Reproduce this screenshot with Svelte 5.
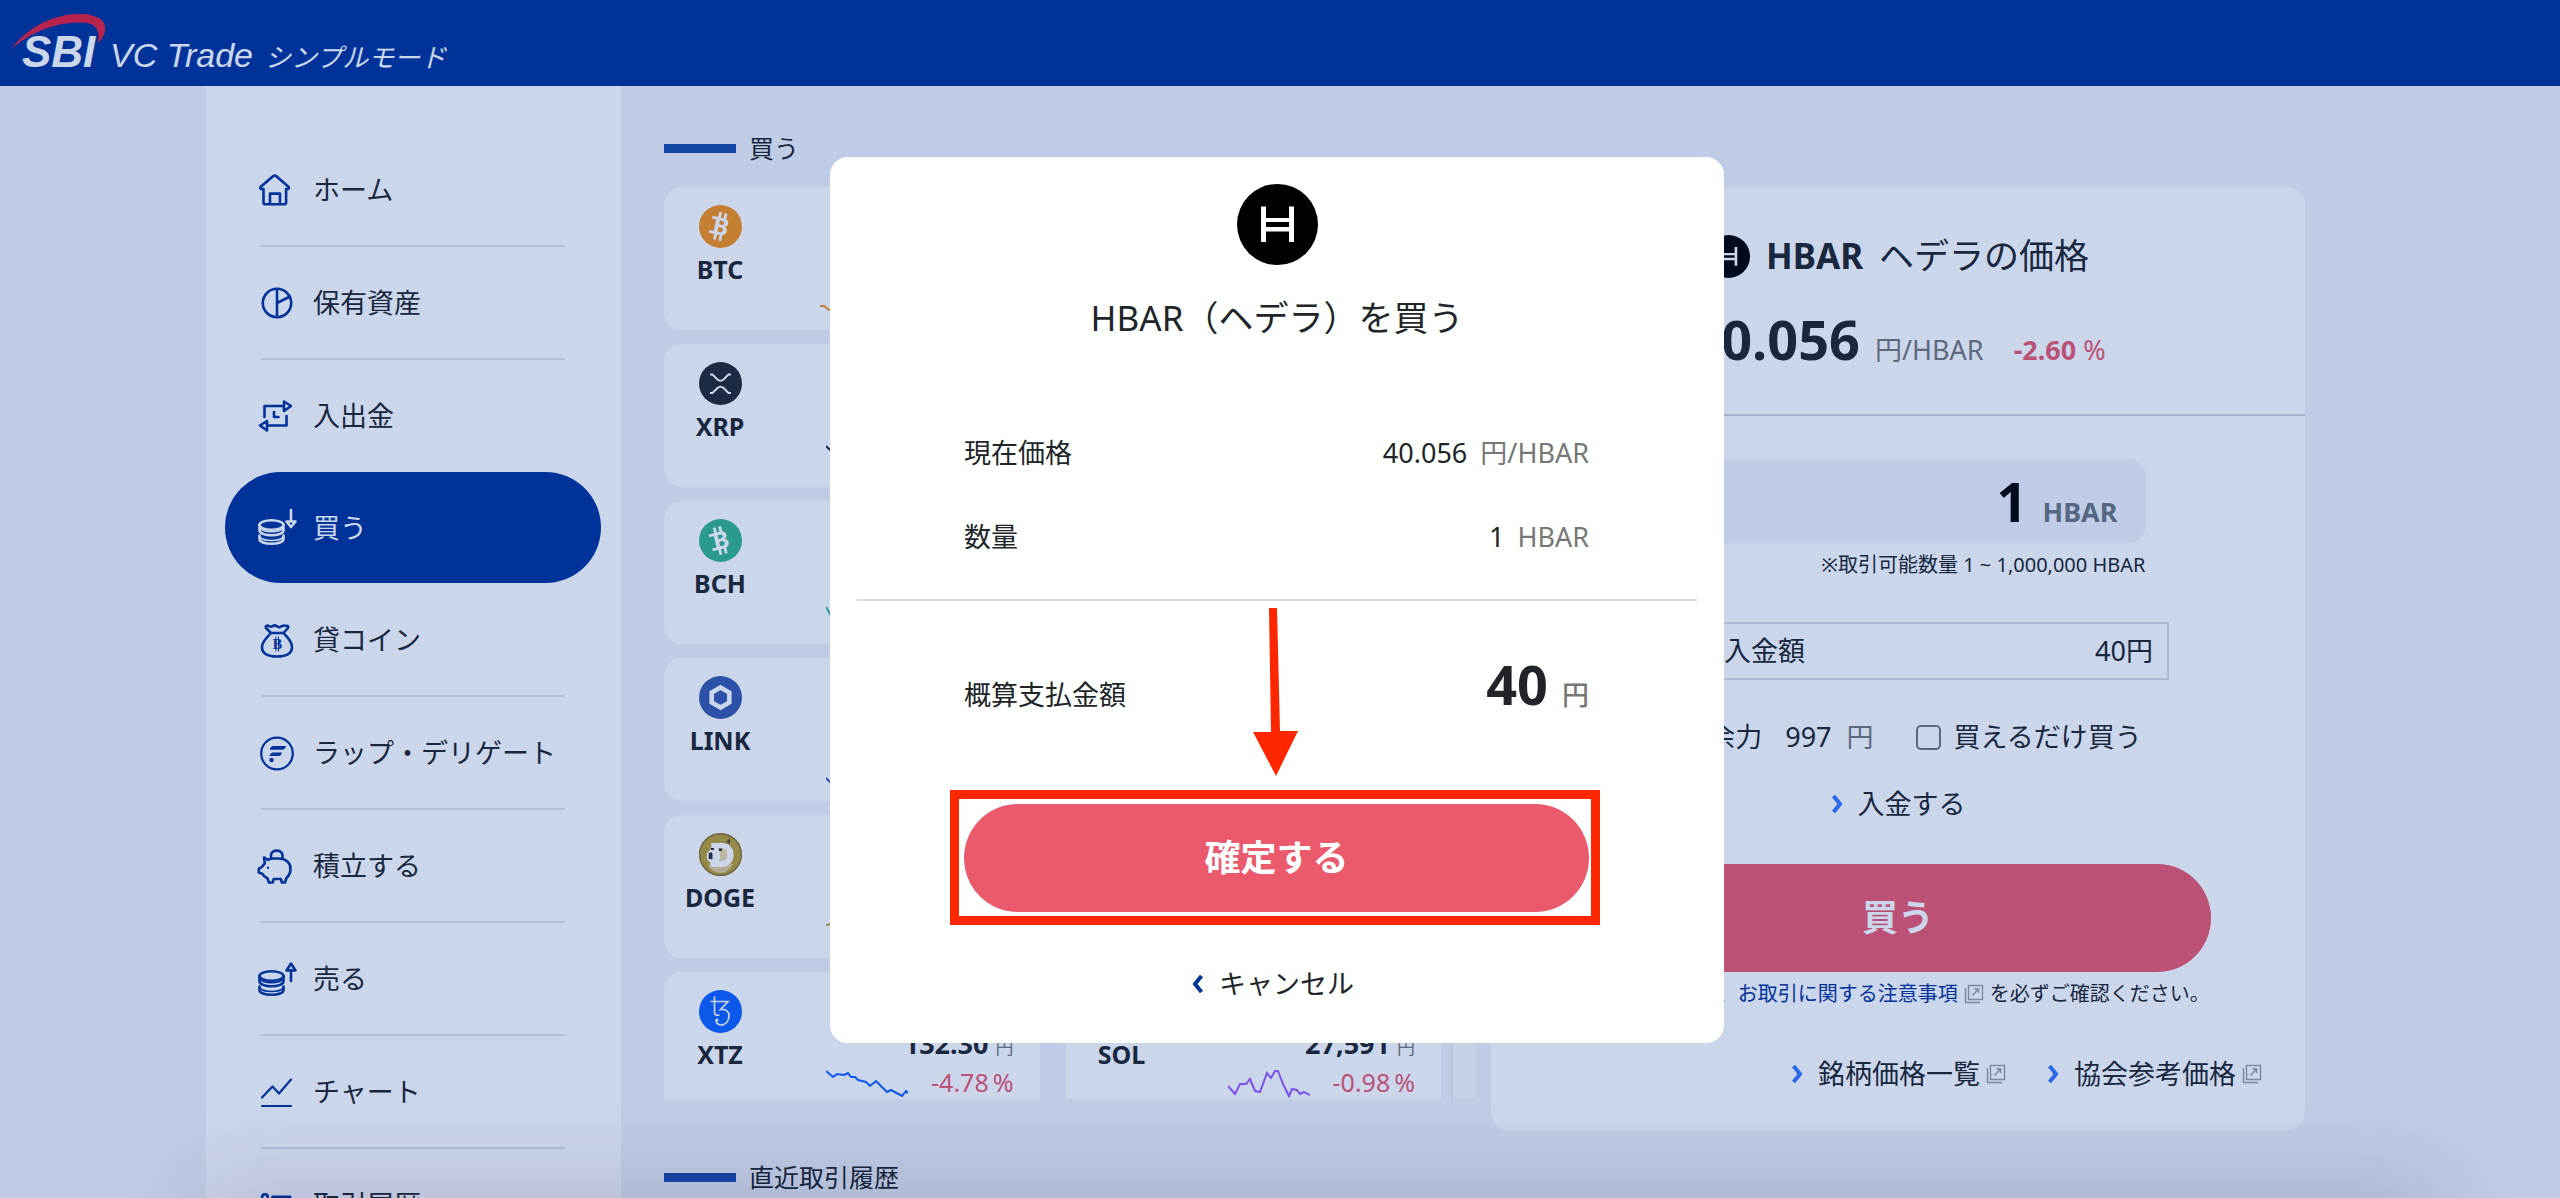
<script>
  const navItems = [
    { icon: "home", label: "ホーム" },
    { icon: "assets", label: "保有資産" },
    { icon: "transfer", label: "入出金", plain: true },
    { icon: "buy", label: "買う", active: true },
    { icon: "lend", label: "貸コイン" },
    { icon: "wrap", label: "ラップ・デリゲート" },
    { icon: "save", label: "積立する" },
    { icon: "sell", label: "売る" },
    { icon: "chart", label: "チャート" },
    { icon: "history", label: "取引履歴" },
  ];

  const coins = [
    { code: "BTC", name: "ビットコイン", price: "15,234,000", change: "+0.42", color: "#f7931a", line: "0,22 4,22 9,26 15,24 24,18 33,21 42,14 55,10 66,12 82,5" },
    { code: "ETH", name: "イーサリアム", price: "392,450", change: "-1.12", color: "#627eea", line: "0,8 12,12 24,6 36,15 48,18 60,14 72,22 82,24" },
    { code: "XRP", name: "エックスアールピー", price: "342.51", change: "-2.05", color: "#23292f", line: "0,5 5,10 12,8 22,15 33,12 45,20 58,18 70,25 82,24" },
    { code: "LTC", name: "ライトコイン", price: "13,480", change: "-1.87", color: "#345d9d", line: "0,6 12,10 24,8 36,16 48,13 60,20 72,22 82,21" },
    { code: "BCH", name: "BitcoinCash", price: "61,230", change: "-3.31", color: "#34b48a", line: "0,9 5,18 12,12 22,16 33,14 45,21 58,19 70,25 82,22" },
    { code: "DOT", name: "ポルカドット", price: "812.40", change: "-2.94", color: "#e6007a", line: "0,8 12,11 24,9 36,17 48,15 60,22 72,20 82,25" },
    { code: "LINK", name: "チェインリンク", price: "2,841", change: "-2.22", color: "#365bac", line: "0,23 5,28 12,18 22,21 33,12 45,16 58,8 70,11 82,14" },
    { code: "FLR", name: "フレア", price: "3.214", change: "-1.46", color: "#e62058", line: "0,9 12,7 24,12 36,15 48,11 60,19 72,24 82,21" },
    { code: "DOGE", name: "ドージコイン", price: "42.180", change: "-3.08", color: "#ba9f33", line: "0,13 6,12 12,15 22,11 33,17 45,15 58,22 70,20 82,25" },
    { code: "XLM", name: "ステラルーメン", price: "51.220", change: "-2.71", color: "#14b6e7", line: "0,8 12,11 24,9 36,17 48,15 60,22 72,20 82,25" },
    { code: "XTZ", name: "テゾス", price: "132.30", change: "-4.78", color: "#0f62ff", line: "0,2 7,8 11,5 18,6 22,4 25,8 29,8 32,11 40,13 44,17 50,12 61,23 65,21 76,27 80,22 82,24" },
    { code: "SOL", name: "ソラナ", price: "27,591", change: "-0.98", color: "#9a5cff", line: "0,17 7,25 12,15 18,15 22,10 27,22 32,23 39,4 43,9 47,2 50,2 55,15 61,27 64,20 69,21 72,25 76,23 82,26" },
  ];

  let buyAll = false;
  let amount = "1";
  let showConfirm = true;

  function closeConfirm() {
    showConfirm = false;
  }
</script>

{#snippet coinStack()}
  <ellipse cx="15.5" cy="19" rx="12" ry="4.8" />
  <path d="M3.5 19v5.5c0 2.6 5.4 4.8 12 4.8s12-2.2 12-4.8V19" />
  <path d="M4 22c1.5 2.2 6 3.7 11.5 3.7s10-1.5 11.5-3.7" stroke-width="1.6" />
  <path d="M3.5 29.5v3.7c0 2.6 5.4 4.6 12 4.6s12-2 12-4.6v-3.7" />
  <path d="M4 31c1.5 2.2 6 3.5 11.5 3.5S25.5 33.2 27 31" stroke-width="1.6" />
{/snippet}

{#snippet navIcon(name)}
  <svg class="nav-icon" viewBox="0 0 44 44" aria-hidden="true">
    {#if name === "home"}
      <path d="M7.5 21v13.5q0 1.8 1.8 1.8h19q1.8 0 1.8-1.8V21M7.5 21H5.2q-1.7-.8-.4-2.3L17 8.2q1.7-1.4 3.4 0l12 10.5q1.3 1.5-.4 2.3h-2M14 36V25.6h10V36" />
    {:else if name === "assets"}
      <circle cx="21" cy="22" r="14.2" />
      <path d="M21 8v28M21 22l13-6.5" />
    {:else if name === "transfer"}
      <path d="M8.5 23V12H27M28 7.5 35 12l-7 5zM18 18v5h4.5M30.5 22v9.5H12M11 27l-7 4.5 7 5z" />
    {:else if name === "buy"}
      {@render coinStack()}
      <path d="M35 4v11M30.5 15.5h9L35 21z" />
    {:else if name === "sell"}
      {@render coinStack()}
      <path d="M35 24V13M30.5 13.5h9L35 6.5z" />
    {:else if name === "lend"}
      <path d="M15 15 10 10q-1-2.5 2-2.5 2.2 1.8 4.5.8 2.2-1.8 4.5 0 2.2 1.8 4.5 0 2.5-1.5 4.5-.3 3-.5 2 2l-4.5 5zM15 15c-3.5 4-9 8-9 14 0 7 6 9.500 15 9.500s15-2.500 15-9.500c0-6-5-10-8.500-14" />
      <path d="M20 19v14M22.500 19v14" stroke-width="1" />
      <text x="21.5" y="31" text-anchor="middle">B</text>
    {:else if name === "wrap"}
      <circle cx="21" cy="22.5" r="15.8" stroke-width="2.2" />
      <path class="solid" d="M17 15h13q-.8 3.8-4 3.8H14q0-3.3 3-3.8zM16.5 21.5h9.500q-1 3.500-3.500 3.500h-9q.5-3 3-3.500z" />
      <circle class="solid" cx="15.5" cy="29" r="2.2" />
    {:else if name === "save"}
      <path d="M8 13.5l.8 6C6 22 6 24 2.8 24.5v4l3.4 1.2c1.3 2.3 3.3 3.8 5.3 4.8l1.5 4h3.8l.8-3.5h7.4l.8 3.5h3.2l1.5-4.5c2.7-2.5 4-5.5 4-9.3 0-6.2-5-10.2-12-10.2h-5c-2.5 0-4 .6-5.5 1.3zM15 14v-2.5c0-6.5 11.5-6.5 11.5 0V14" />
      <circle class="solid" cx="12" cy="23.7" r="1.2" />
    {:else if name === "chart"}
      <path d="M6 27.5 16.5 16.5 23 23.5 35 9.5M6 36h29" stroke-width="2.2" />
    {:else}
      <circle cx="9" cy="14" r="2.8" />
      <circle cx="9" cy="30" r="2.8" />
      <path d="M16.5 14H34M16.5 22H34M16.5 30H34" stroke-width="3" />
    {/if}
  </svg>
{/snippet}

{#snippet hederaIcon()}
  <svg viewBox="0 0 81 81" aria-hidden="true">
    <circle cx="40.5" cy="40.5" r="40.5" fill="#000" />
    <path d="M24 22.500h5V34h23V22.500h5v35.500h-5V47.500H29V58h-5zM29 38v5h23v-5z" fill="#fff" fill-rule="evenodd" />
  </svg>
{/snippet}

{#snippet coinIcon(coin)}
  <svg class="coin-icon" viewBox="0 0 43 43" aria-hidden="true">
    <circle cx="21.5" cy="21.5" r="21.5" fill={coin.color} />
    {#if coin.code === "BTC" || coin.code === "BCH"}
      <g transform={coin.code === "BTC" ? "rotate(13 21.5 21.5)" : "rotate(-14 21.5 21.5)"}>
        <text class="mark" x="22" y="30" text-anchor="middle">B</text>
        <path d="M18.5 7.5v7M24 7.5v7M18.5 28.5v7M24 28.5v7M11.5 14.3h6M11.5 28.7h6" stroke="#fff" stroke-width="2.8" />
      </g>
    {:else if coin.code === "XRP"}
      <path d="M11 12.5h2.5l4.7 4.7q3.3 3 6.6 0l4.7-4.7H32M11 31h2.5l4.7-4.7q3.3-3 6.6 0l4.7 4.7H32" fill="none" stroke="#fff" stroke-width="2" />
    {:else if coin.code === "LINK"}
      <path d="M21.5 11.5l8.8 5v10l-8.8 5-8.8-5v-10z" fill="none" stroke="#fff" stroke-width="4.6" />
    {:else if coin.code === "DOGE"}
      <circle cx="21.5" cy="21.5" r="20.8" fill="none" stroke="#8c7433" stroke-width="1.4" />
      <path d="M9 33q8-6 25-2-5 9-13 9-7-1-12-7z" fill="#dcc995" />
      <path d="M27 9l4-4v6z" fill="#5b4a2b" />
      <path d="M12 10h11c16 0 15 24 0 24H12l-1-5c-4-2-4-7-2-10 3-2 4-5 3-9z" fill="#fff" />
      <path d="M19 15h4c7 0 7 13 1 13h-4c2-3 1-9-1-13z" fill="#ecd9a4" />
      <path d="M10 20q3-2 3.500 1v5q-3 1-4-1zM20 15.500h3v2.500h-3zM12 15h3v2h-3z" fill="#2b2b35" />
    {:else if coin.code === "XTZ"}
      <path d="M11.5 11.5h17.5l-7.5 8c6-.8 9 2.5 8.5 7-.4 5.5-4.5 9-8.5 8.5-3.5-.4-5-3-4-5.5M15.5 6.5v16q0 3.5 5 2.5" fill="none" stroke="#fff" stroke-width="1.7" />
      <circle cx="18" cy="30" r="1.6" fill="#fff" />
    {/if}
  </svg>
{/snippet}

{#snippet chevron()}
  <svg class="chevron" viewBox="0 0 12 18" aria-hidden="true">
    <path d="M2.5 1 9 9l-6.5 8" />
  </svg>
{/snippet}

{#snippet externalIcon()}
  <svg class="external" viewBox="0 0 20 20" aria-hidden="true">
    <path d="M4.5 1.5h14v14h-14zM1.5 4v14.5H16M8.5 11.5l6-6.5M10.500 5h4v4" />
  </svg>
{/snippet}

<div class="app">
  <header class="topbar">
    <a class="brand" href="#home">
      <span class="brand-mark">
        SBI
        <svg class="swoosh" viewBox="0 0 96 36" aria-hidden="true">
          <path d="M0 35C17 13 42 0 69 0 88 0 96 8 94 17c-1 5-3 8-7 12C89 17 86 9 71 8.500 42 8 18 20 0 35z" />
        </svg>
      </span>
      <span class="brand-name">VC Trade</span>
      <span class="brand-mode">シンプルモード</span>
    </a>
  </header>

  <div class="page">
    <nav class="sidebar">
      <ul>
        {#each navItems as item}
          <li class:plain={item.plain || item.active}>
            <a class="nav-link" class:active={item.active} href="#{item.icon}">
              {@render navIcon(item.icon)}
              {item.label}
            </a>
          </li>
        {/each}
      </ul>
    </nav>

    <main class="market">
      <h2 class="section-title">買う</h2>
      <div class="coin-scroll">
        <div class="coin-grid">
          {#each coins as coin}
            <article class="coin-card">
              <div class="coin-id">
                {@render coinIcon(coin)}
                <strong>{coin.code}</strong>
              </div>
              <div class="coin-data">
                <span class="coin-name">{coin.name}</span>
                <span class="coin-price"><b>{coin.price}</b><small>円</small></span>
                <span class="coin-change">
                  <svg class="spark" viewBox="0 0 82 30" aria-hidden="true">
                    <polyline points={coin.line} stroke={coin.color} />
                  </svg>
                  <span>{coin.change}</span><span class="percent">%</span>
                </span>
              </div>
            </article>
          {/each}
        </div>
        <div class="scroll-track"></div>
      </div>
      <h2 class="section-title history">直近取引履歴</h2>
    </main>

    <section class="order">
      <div class="order-head">
        <h1>
          <span class="head-icon">{@render hederaIcon()}</span>
          <b>HBAR</b>
          <span>ヘデラの価格</span>
        </h1>
        <p class="quote">
          <b class="big">40.056</b>
          <span class="unit">円/HBAR</span>
          <span class="change"><b>-2.60</b> %</span>
        </p>
      </div>

      <div class="order-body">
        <label class="amount">
          <input class="big" type="text" aria-label="数量" bind:value={amount} />
          <span>HBAR</span>
        </label>
        <p class="amount-note">※取引可能数量 1 ~ 1,000,000 HBAR</p>

        <div class="deposit">
          <span>日本円入金額</span>
          <span>40円</span>
        </div>

        <div class="balance">
          <span>買付余力</span>
          <span class="balance-value">997</span>
          <span class="unit">円</span>
          <label class="buy-all">
            <input type="checkbox" bind:checked={buyAll} />
            買えるだけ買う
          </label>
        </div>

        <a class="arrow-link" href="#deposit">{@render chevron()}入金する</a>
        <button class="action" type="button">買う</button>
        <p class="caution">
          お取引の前に、<a href="#notes">お取引に関する注意事項</a>{@render externalIcon()}を必ずご確認ください。
        </p>
        <div class="order-links">
          <a class="arrow-link" href="#prices">{@render chevron()}銘柄価格一覧{@render externalIcon()}</a>
          <a class="arrow-link" href="#reference">{@render chevron()}協会参考価格{@render externalIcon()}</a>
        </div>
      </div>
    </section>
  </div>

  {#if showConfirm}
    <div class="overlay">
      <div class="modal" role="dialog" aria-modal="true" aria-labelledby="confirm-title">
        <div class="modal-icon">{@render hederaIcon()}</div>
        <h2 id="confirm-title">HBAR（ヘデラ）を買う</h2>
        <dl class="details">
          <div class="detail">
            <dt>現在価格</dt>
            <dd>40.056 <span class="unit">円/HBAR</span></dd>
          </div>
          <div class="detail">
            <dt>数量</dt>
            <dd>1 <span class="unit">HBAR</span></dd>
          </div>
        </dl>
        <hr />
        <dl class="total">
          <dt>概算支払金額</dt>
          <dd><b class="big">40</b><span class="unit">円</span></dd>
        </dl>
        <div class="confirm">
          <svg class="pointer" viewBox="0 0 46 168" aria-hidden="true">
            <path d="M16 0h8l3 123h18L23 168 0 124h18z" />
          </svg>
          <span class="frame"></span>
          <button class="action" type="button">確定する</button>
        </div>
        <button class="cancel" type="button" on:click={closeConfirm}>
          {@render chevron()}キャンセル
        </button>
      </div>
    </div>
  {/if}

  <div class="bottom-shade"></div>
</div>

<style>
  :global(body) {
    background: #f0f2f8;
  }

  .app {
    height: 100vh;
    overflow: hidden;
    color: #212529;
    font-family: "Noto Sans", "Noto Sans CJK JP", sans-serif;
    font-size: 27px;
    line-height: 36px;
  }

  h1,
  h2,
  p,
  ul,
  dl,
  dd {
    margin: 0;
    padding: 0;
    font-weight: 400;
  }

  a {
    color: inherit;
    text-decoration: none;
  }

  button,
  input {
    font-family: inherit;
    cursor: pointer;
  }

  .big {
    font-size: 54px;
    line-height: 60px;
    font-weight: 700;
  }

  .unit {
    color: #777;
  }

  .topbar {
    height: 86px;
    box-sizing: border-box;
    padding: 26px 22px 0;
    background: #003399;
  }

  .brand {
    display: inline-flex;
    align-items: baseline;
    gap: 12px;
    color: #fff;
    font-family: "Liberation Sans", "Noto Sans CJK JP", sans-serif;
    font-style: italic;
    line-height: 52px;
  }

  .brand-mark {
    position: relative;
    width: 76px;
    font-size: 44px;
    font-weight: 700;
  }

  .swoosh {
    position: absolute;
    top: -12px;
    left: -11px;
    width: 96px;
    height: 36px;
    fill: #e4203a;
  }

  .brand-name {
    font-size: 34px;
  }

  .brand-mode {
    font-size: 26px;
  }

  .page {
    display: grid;
    grid-template-columns: 415px 855fr 829fr;
    padding: 0 255px 0 206px;
  }

  .sidebar {
    padding: 48px 20px 0 19px;
    background: #fff;
  }

  .sidebar ul {
    list-style: none;
  }

  .sidebar li {
    margin: 0 36px;
    border-bottom: 2px solid #e0e2e6;
  }

  .sidebar li.plain {
    border-bottom: 1px solid transparent;
  }

  .nav-link {
    display: flex;
    align-items: center;
    gap: 13px;
    height: 111px;
    margin: 0 -36px;
    padding-left: 31px;
    border-radius: 56px;
    white-space: nowrap;
  }

  .nav-link.active {
    background: #003399;
    color: #fff;
  }

  .nav-icon {
    width: 44px;
    height: 44px;
    fill: none;
    stroke: #003399;
    stroke-width: 2.6;
    stroke-linecap: round;
    stroke-linejoin: round;
  }

  .nav-icon .solid {
    fill: #003399;
    stroke: none;
  }

  .nav-icon text {
    fill: #003399;
    stroke: none;
    font-family: "Liberation Serif", serif;
    font-size: 14px;
    font-weight: 700;
  }

  .active .nav-icon {
    stroke: #fff;
  }

  .market {
    padding: 44px 0 0 43px;
  }

  .section-title {
    display: flex;
    align-items: center;
    gap: 13px;
    font-size: 25px;
  }

  .section-title::before {
    content: "";
    width: 72px;
    height: 9px;
    background: #1a4ca8;
  }

  .section-title.history {
    margin-top: 60px;
  }

  .coin-scroll {
    display: flex;
    gap: 10px;
    max-height: 912px;
    margin-top: 21px;
    overflow: hidden;
  }

  .coin-grid {
    flex: 1;
    display: grid;
    grid-template-columns: 1fr 1fr;
    gap: 14px 26px;
  }

  .coin-card {
    display: flex;
    justify-content: space-between;
    height: 143px;
    box-sizing: border-box;
    padding: 18px 26px 0 0;
    border-radius: 18px;
    background: #fff;
  }

  .coin-id {
    display: flex;
    flex-direction: column;
    align-items: center;
    gap: 6px;
    width: 112px;
    font-size: 25px;
    line-height: 30px;
  }

  .coin-icon {
    width: 43px;
    height: 43px;
  }

  .coin-icon .mark {
    fill: #fff;
    font-size: 24px;
    font-weight: 700;
  }

  .coin-data {
    display: flex;
    flex-direction: column;
    align-items: flex-end;
    white-space: nowrap;
  }

  .coin-name {
    font-size: 20px;
    line-height: 28px;
  }

  .coin-price {
    margin-top: 8px;
  }

  .coin-price small {
    margin-left: 7px;
    color: #777;
    font-size: 18px;
  }

  .coin-change {
    display: flex;
    align-items: flex-end;
    color: #ea5a6c;
    font-size: 25px;
    line-height: 34px;
  }

  .spark {
    width: 82px;
    height: 30px;
    margin-right: 23px;
    fill: none;
    stroke-width: 2;
  }

  .percent {
    margin-left: 4px;
  }

  .scroll-track {
    width: 25px;
    box-sizing: border-box;
    border-left: 2px solid #e8eaef;
    background: #fafafa;
  }

  .order {
    align-self: start;
    margin: 101px 0 0 15px;
    border-radius: 18px;
    background: #fff;
  }

  .order-head {
    padding: 45px 0;
    border-bottom: 2px solid #cdd2da;
  }

  .order-head h1 {
    display: flex;
    justify-content: center;
    align-items: center;
    gap: 16px;
    font-size: 35px;
    line-height: 48px;
  }

  .head-icon {
    width: 43px;
    height: 43px;
  }

  .head-icon :global(svg),
  .modal-icon :global(svg) {
    display: block;
    width: 100%;
    height: 100%;
  }

  .quote {
    display: flex;
    justify-content: center;
    align-items: baseline;
    margin-top: 29px;
  }

  .quote .unit {
    margin-left: 15px;
  }

  .quote .change {
    margin-left: 30px;
    color: #ea5a6c;
  }

  .order-body {
    display: flex;
    flex-direction: column;
    align-items: center;
    padding: 43px 43px 38px;
  }

  .amount {
    display: flex;
    align-items: baseline;
    gap: 15px;
    width: 495px;
    height: 84px;
    box-sizing: border-box;
    padding: 12px 28px 0;
    border-radius: 18px;
    background: #f0f2f8;
    color: #6c757d;
    font-weight: 700;
  }

  .amount input {
    flex: 1;
    min-width: 0;
    padding: 0;
    border: 0;
    background: transparent;
    color: #000;
    text-align: right;
  }

  .amount-note {
    width: 495px;
    margin-top: 8px;
    font-size: 20px;
    line-height: 28px;
    text-align: right;
  }

  .deposit {
    display: flex;
    justify-content: space-between;
    align-items: center;
    width: 542px;
    height: 58px;
    box-sizing: border-box;
    margin-top: 43px;
    padding: 0 14px;
    border: 2px solid #d8dbe4;
  }

  .balance {
    display: flex;
    align-items: center;
    margin-top: 39px;
  }

  .balance-value {
    margin: 0 15px 0 23px;
  }

  .buy-all {
    display: flex;
    align-items: center;
    gap: 13px;
    margin-left: 42px;
  }

  .buy-all input {
    appearance: none;
    width: 25px;
    height: 25px;
    margin: 0;
    border: 2px solid #767676;
    border-radius: 5px;
    background: #fff;
  }

  .arrow-link {
    display: flex;
    align-items: center;
  }

  .chevron {
    width: 12px;
    height: 18px;
    margin-right: 15px;
    fill: none;
    stroke: #3479fc;
    stroke-width: 4;
  }

  .order-body > .arrow-link {
    margin: 31px 0 42px;
  }

  .action {
    width: 626px;
    height: 108px;
    border: 0;
    border-radius: 54px;
    background: #ea5a6c;
    color: #fff;
    font-size: 36px;
    font-weight: 700;
    line-height: 48px;
  }

  .caution {
    display: flex;
    align-items: center;
    margin-top: 8px;
    padding-left: 12px;
    font-size: 20px;
    line-height: 28px;
    white-space: nowrap;
  }

  .caution a {
    color: #003399;
  }

  .external {
    width: 20px;
    height: 20px;
    margin: 0 6px;
    fill: none;
    stroke: #9a9ea6;
    stroke-width: 1.4;
  }

  .order-links {
    display: flex;
    align-self: flex-end;
    gap: 41px;
    margin-top: 48px;
  }

  .order-links .external {
    margin-right: 0;
  }

  .overlay {
    position: fixed;
    inset: 0;
    display: flex;
    justify-content: center;
    align-items: center;
    padding: 2px 6px 0 0;
    background: rgba(0, 51, 153, 0.2);
  }

  .modal {
    width: 894px;
    box-sizing: border-box;
    padding: 27px 27px 41px;
    border-radius: 18px;
    background: #fff;
  }

  .modal-icon {
    width: 81px;
    height: 81px;
    margin: 0 auto;
  }

  .modal h2 {
    margin-top: 29px;
    font-size: 35px;
    line-height: 48px;
    text-align: center;
  }

  .details {
    display: grid;
    gap: 48px;
    margin: 93px 108px 44px 107px;
  }

  .detail {
    display: flex;
    justify-content: space-between;
  }

  .detail .unit {
    margin-left: 6px;
  }

  .modal hr {
    height: 2px;
    margin: 0;
    border: 0;
    background: #d8d8d8;
  }

  .total {
    display: flex;
    justify-content: space-between;
    align-items: baseline;
    margin: 53px 108px 90px 107px;
  }

  .total .unit {
    margin-left: 14px;
    font-weight: 500;
  }

  .confirm {
    position: relative;
    margin: 0 108px 54px 107px;
  }

  .confirm .action {
    display: block;
    width: 100%;
  }

  .frame {
    position: absolute;
    inset: -14px -11px -13px -14px;
    border: 9px solid #ff2600;
    pointer-events: none;
  }

  .pointer {
    position: absolute;
    left: calc(50% - 24px);
    bottom: 136px;
    width: 46px;
    height: 168px;
    fill: #ff2600;
  }

  .cancel {
    display: flex;
    align-items: center;
    margin: 0 auto;
    padding: 0 8px 0 0;
    border: 0;
    background: transparent;
    color: inherit;
    font-size: 27px;
    line-height: 36px;
  }

  .cancel .chevron {
    stroke: #003399;
    transform: scaleX(-1);
  }

  .bottom-shade {
    position: fixed;
    right: 120px;
    bottom: -40px;
    left: 200px;
    height: 40px;
    border-radius: 40px;
    box-shadow: 0 0 90px 0 rgba(20, 0, 50, 0.25);
    pointer-events: none;
  }
</style>
